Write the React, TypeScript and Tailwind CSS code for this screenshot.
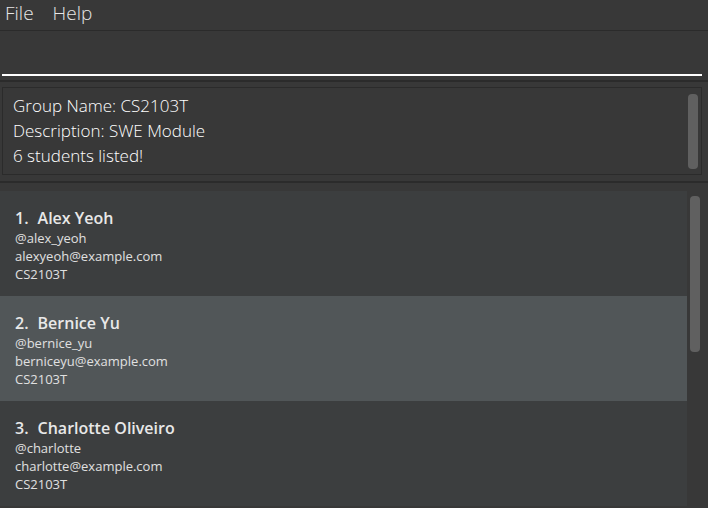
const students = [
  { n: 1, name: 'Alex Yeoh', handle: '@alex_yeoh', email: 'alexyeoh@example.com', group: 'CS2103T' },
  { n: 2, name: 'Bernice Yu', handle: '@bernice_yu', email: 'berniceyu@example.com', group: 'CS2103T' },
  { n: 3, name: 'Charlotte Oliveiro', handle: '@charlotte', email: 'charlotte@example.com', group: 'CS2103T' },
];

const FONT = { fontFamily: '"Open Sans", "Noto Sans", sans-serif' };

function Card({ n, name, handle, email, group }: (typeof students)[number]) {
  const odd = n % 2 === 0;
  return (
    <div className={`h-[105px] px-[15px] pt-[16px] ${odd ? 'bg-[#515658]' : 'bg-[#3c3e3f]'}`}>
      <div className="flex text-[16px] font-semibold leading-[22px] text-[#e8e8e8]">
        <span>{n}.</span>
        <span className="ml-[9px]">{name}</span>
      </div>
      <div className="text-[13px] leading-[18px] text-[#e0e0e0]">
        <div>{handle}</div>
        <div>{email}</div>
        <div>{group}</div>
      </div>
    </div>
  );
}

export default function App() {
  return (
    <div className="flex h-[508px] w-[708px] flex-col overflow-hidden bg-[#383838]" style={FONT}>
      {/* menu */}
      <div className="flex h-[31px] items-center gap-[19px] border-b border-[#2b2b2b] pl-[5px] pb-[3px] text-[19px] font-light text-[#e6e6e6]">
        <span>File</span>
        <span>Help</span>
      </div>

      {/* command box */}
      <div className="h-[49px] pl-[2px] pr-[6px] pt-[43px]">
        <div className="h-[1.5px] w-full bg-white" />
      </div>
      <div className="h-[2px] bg-[#2b2b2b]" />

      {/* result display */}
      <div className="pl-[2px] pr-[6px] pt-[5px]">
        <div className="flex h-[88px] border border-[#2b2b2b] pl-[10px] pr-[3px] pt-[5px]">
          <div className="flex-1 text-[17px] font-light leading-[25px] text-white">
            <div>Group Name: CS2103T</div>
            <div>Description: SWE Module</div>
            <div>6 students listed!</div>
          </div>
          <div className="mt-[1px] h-[75px] w-[10px] rounded-[4px] bg-[#606060]" />
        </div>
      </div>
      <div className="mt-[6px] h-[2px] bg-[#2b2b2b]" />

      {/* list */}
      <div className="flex flex-1 pt-[8px]">
        <div className="w-[687px]">
          {students.map((s) => (
            <Card key={s.n} {...s} />
          ))}
        </div>
        <div className="flex-1 pl-[3px] pt-[5px]">
          <div className="h-[156px] w-[10px] rounded-[4px] bg-[#606060]" />
        </div>
      </div>
    </div>
  );
}
